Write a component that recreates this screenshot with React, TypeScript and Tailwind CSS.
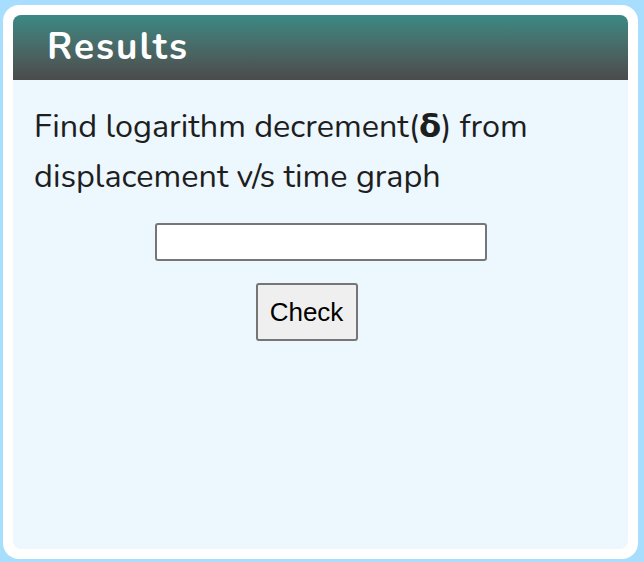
export default function App() {
  return (
    <div className="w-[644px] h-[562px] bg-[#a7defe] pl-[3px] pr-[6px] pt-[5px] pb-[3px]">
      <div className="h-full bg-white rounded-[16px] p-[10px]">
        <div className="h-full flex flex-col rounded-[8px] overflow-hidden bg-[#edf7fe]">
          <div className="h-[65px] shrink-0 bg-gradient-to-b from-[#3a8984] to-[#4b4b4b] pl-[34px] flex items-center">
            <h1 className="text-white font-bold text-[37px] tracking-[2px] font-['Nunito','Lato','Noto_Sans',sans-serif] leading-none">
              Results
            </h1>
          </div>
          <div className="px-[21px] pt-[21px]">
            <p className="text-[#1e1e1e] text-[32.4px] leading-[50px] font-['Nunito','Lato','Noto_Sans',sans-serif]">
              Find logarithm decrement(<b className="font-['DejaVu_Sans',sans-serif]">δ</b>) from displacement v/s time graph
            </p>
            <div className="flex justify-center mt-[22px]">
              <input
                type="text"
                className="w-[332px] h-[38px] bg-white border-2 border-[#767676] rounded-[3px] outline-none"
              />
            </div>
            <div className="flex justify-center mt-[22px]">
              <button className="mr-[28px] w-[102px] h-[58px] bg-[#efefef] border-2 border-[#767676] rounded-[3px] text-black text-[26px] font-['Liberation_Sans',Arial,sans-serif]">
                Check
              </button>
            </div>
          </div>
        </div>
      </div>
    </div>
  );
}
